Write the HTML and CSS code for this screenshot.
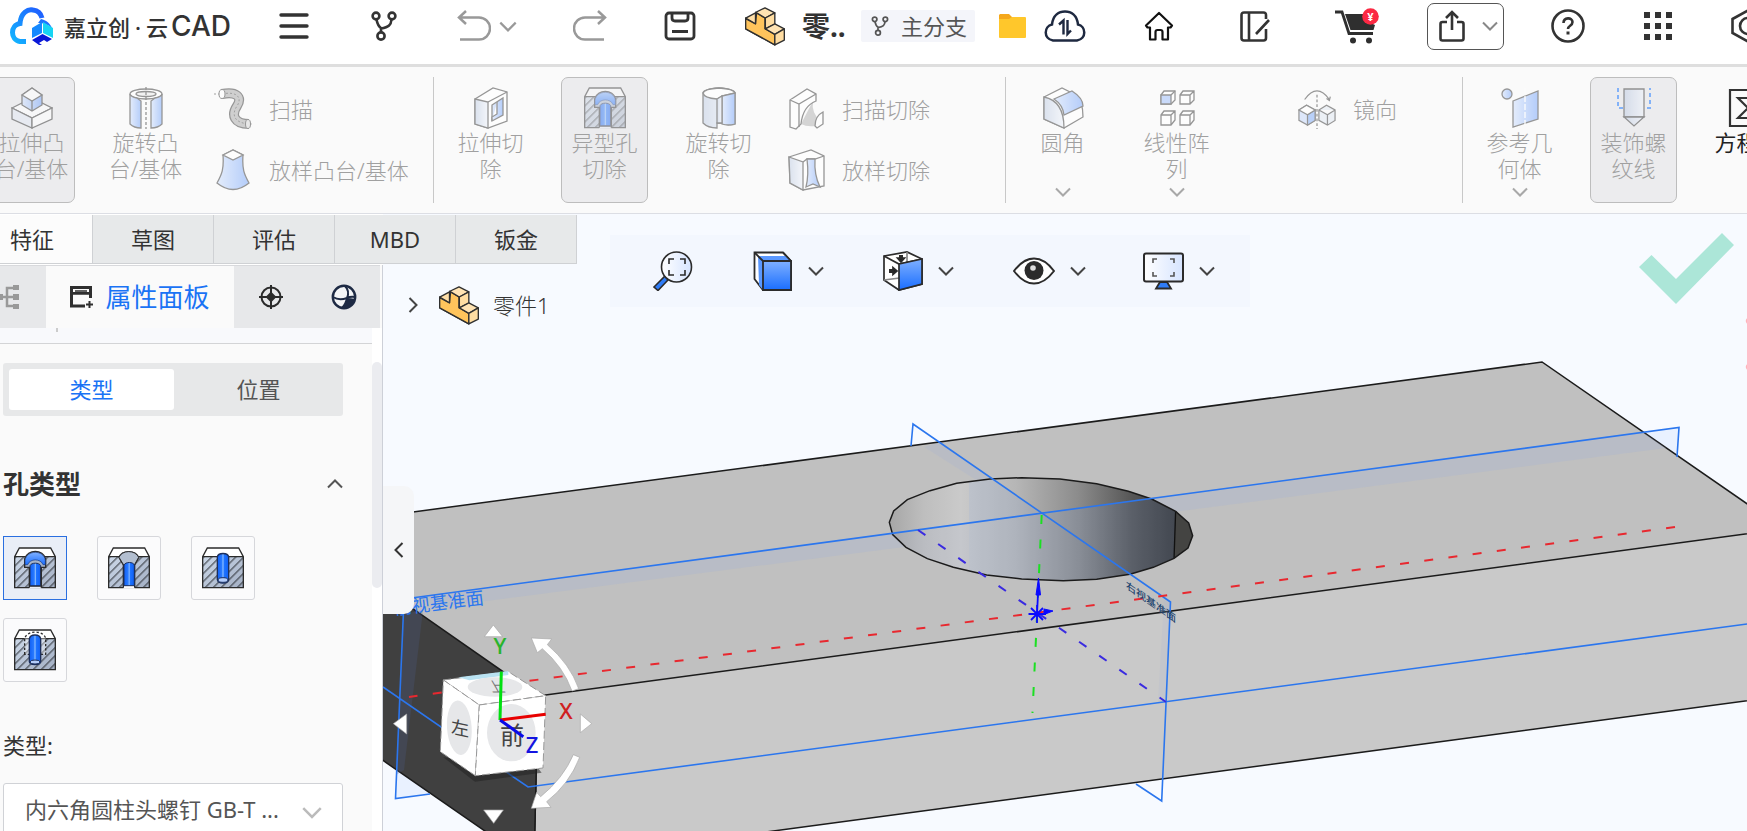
FILE: index.html
```html
<!DOCTYPE html>
<html lang="zh-CN">
<head>
<meta charset="utf-8">
<meta name="viewport" content="width=device-width, initial-scale=1">
<title>嘉立创·云CAD</title>
<link rel="stylesheet" href="styles.css">
</head>
<body>
<svg class="defs" width="0" height="0" aria-hidden="true">
  <defs>
    <linearGradient id="gBlue" x1="0" y1="0" x2="0" y2="1"><stop offset="0" stop-color="#7fb0ff"/><stop offset="1" stop-color="#1a6eff"/></linearGradient>
    <linearGradient id="gPale" x1="0" y1="0" x2="1" y2="0"><stop offset="0" stop-color="#d6e4fd"/><stop offset="1" stop-color="#86affa"/></linearGradient>
    <linearGradient id="gMist" x1="0" y1="0" x2="1" y2="0"><stop offset="0" stop-color="#c6d2e6"/><stop offset="1" stop-color="#f0f4fb"/></linearGradient>
    <linearGradient id="gGlass" x1="0" y1="0" x2="1" y2="0"><stop offset="0" stop-color="#fff"/><stop offset="1" stop-color="#d6e4ff"/></linearGradient>
    <linearGradient id="gSteel" x1="0" y1="0" x2="1" y2="1"><stop offset="0" stop-color="#ccd8e8"/><stop offset="1" stop-color="#a3afc4"/></linearGradient>
    <linearGradient id="gStem" x1="0" y1="0" x2="1" y2="0"><stop offset="0" stop-color="#0f5ff5"/><stop offset=".4" stop-color="#2a7bff"/><stop offset=".5" stop-color="#8fc0ff"/><stop offset=".6" stop-color="#1f74ff"/><stop offset="1" stop-color="#0f5ff5"/></linearGradient>
    <linearGradient id="gCloud" x1="1" y1="0" x2="0" y2="1"><stop offset="0" stop-color="#1f5cff"/><stop offset="1" stop-color="#12b5ff"/></linearGradient>
    <pattern id="hatch" width="17" height="17" patternUnits="userSpaceOnUse" patternTransform="rotate(45)"><path d="M8 0V17" stroke="#2b2f36" stroke-width="3"/></pattern>
    <symbol id="chev" viewBox="0 0 16 10"><path d="M1 1.5 8 8.5 15 1.5" fill="none" stroke="currentColor" stroke-width="2"/></symbol>
    <symbol id="branch" viewBox="0 0 26 30"><g fill="none" stroke="currentColor" stroke-width="2.6"><circle cx="5" cy="5" r="3.4"/><circle cx="21" cy="5" r="3.4"/><circle cx="10" cy="25" r="3.6"/><path d="M5.500 8.500c1 5 2 7 4.500 8.500V21M20.500 8.500C20 14 18 16 10 17.500"/></g></symbol>
    <symbol id="part" viewBox="0 0 118 114"><g stroke="#2f2f2f" stroke-width="4" stroke-linejoin="round"><path d="M2 32 32 48V15L60 60 88 78V111L2 64Z" fill="#ffc45c"/><path d="M34 17 59 32V63L88 80V111L2 64V34L31 49Z" fill="#ffc45c"/><path d="M2 32 31 17V49Z" fill="#ffdfa8"/><path d="M32 15 59 2 88 17 60 32Z" fill="#ffe3b3"/><path d="M60 32 88 17V50L60 64Z" fill="#ffdda2"/><path d="M60 64 88 49 116 64 88 80Z" fill="#ffe3b3"/><path d="M88 80 116 64V97L88 111Z" fill="#ffdda2"/></g></symbol>
    <symbol id="block" viewBox="0 0 126 126"><path d="M16 3H110L124 29H2Z" fill="#fff"/><path d="M2 29H124V122H2Z" fill="url(#gSteel)"/><path d="M2 29H124V122H2Z" fill="url(#hatch)"/><path d="M16 3H110L124 29V122H2V29ZM2 29H124" fill="none" stroke="#2b2b2b" stroke-width="4"/></symbol>
    <symbol id="hole-bore" viewBox="0 0 126 126"><use href="#block"/><path d="M45 58H82V125H45Z" fill="#e9eef7"/><path d="M32 61V36C40 6 88 6 95 36V61H80V117H48V61Z" fill="#a5b3c9" stroke="#2b2b2b" stroke-width="4"/><path d="M33 40C38 8 90 8 94 40V53H87C80 34 48 34 41 53H33Z" fill="url(#gBlue)" stroke="#1c3a78" stroke-width="2"/><path d="M48 56C52 46 76 46 80 56V116H48Z" fill="url(#gStem)" stroke="#1c2f5c" stroke-width="3"/><path d="M46 61V122M82 61V122" stroke="#2b2b2b" stroke-width="4"/></symbol>
    <symbol id="hole-sink" viewBox="0 0 126 126"><use href="#block"/><path d="M46 54H80V125H46Z" fill="#fbfbfc"/><path d="M33 31C42 8 82 8 92 31L80 54V122M33 31 46 54V122" fill="none" stroke="#2b2b2b" stroke-width="4"/><path d="M33 31C42 8 82 8 92 31L79 54H47Z" fill="#b3bfd0" stroke="#2b2b2b" stroke-width="3"/><path d="M48 54C52 44 76 44 79 54V116H48Z" fill="url(#gStem)" stroke="#1c2f5c" stroke-width="3"/></symbol>
    <symbol id="hole-plain" viewBox="0 0 126 126"><use href="#block"/><path d="M46 30C48 16 78 16 80 30V98C78 112 48 112 46 98Z" fill="url(#gStem)" stroke="#1c2f5c" stroke-width="4"/><ellipse cx="63" cy="99" rx="15" ry="7" fill="#b4cdfa" stroke="#1c2f5c" stroke-width="3"/></symbol>
    <symbol id="hole-tap" viewBox="0 0 126 126"><use href="#block"/><path d="M32 76V28C40 3 88 3 95 28V76Z" fill="#fff" fill-opacity=".35" stroke="#2b2b2b" stroke-width="4" stroke-dasharray="7 6"/><path d="M46 30C48 14 78 14 80 30V98C78 110 48 110 46 98Z" fill="url(#gStem)" stroke="#1c2f5c" stroke-width="4"/><ellipse cx="63" cy="99" rx="15" ry="6" fill="#b4cdfa" stroke="#1c2f5c" stroke-width="3"/></symbol>
  </defs>
</svg>

<div class="app">
  <header class="topbar">
    <a class="brand" href="#" aria-label="嘉立创·云CAD">
      <svg width="44" height="38" viewBox="0 0 44 38"><path d="M16 34.500H10C0 33 0 18 10 16.500C11 5 18 2 23 3C28 3.500 31 7 32 11" fill="none" stroke="url(#gCloud)" stroke-width="5"/><path d="M31 12c5 1 9 4 11 9-5-4-9-5-14-5Z" fill="#1f74ff"/><path d="M22 21 32 15V26L22 31Z" fill="#1689ff"/><path d="M33 15 43 21V31L33 26Z" fill="#17d4f4"/><path d="M22 33 32.500 27 42 32 37 35 34 33 29 36 32 38H29Z" fill="#0a18d8"/></svg>
      <span class="brand-text">嘉立创<span class="dot">·</span>云<span class="cad">CAD</span></span>
    </a>
    <nav class="tools" aria-label="主工具">
      <button class="tb" aria-label="菜单"><svg width="30" height="28" viewBox="0 0 30 28"><path d="M2 3H28M2 14H28M2 25H28" stroke="currentColor" stroke-width="3.400" stroke-linecap="round"/></svg></button>
      <button class="tb" aria-label="分支"><svg width="26" height="30"><use href="#branch"/></svg></button>
      <button class="tb tb-wide dim" aria-label="撤销"><svg width="34" height="32" viewBox="0 0 34 32" fill="none" stroke="currentColor" stroke-width="2.500"><path d="M9 1 2 7.500 9 14M2 7.500H22a11 11 0 0 1 0 22H3"/></svg><svg width="18" height="11"><use href="#chev"/></svg></button>
      <button class="tb dim" aria-label="重做"><svg width="34" height="32" viewBox="0 0 34 32" fill="none" stroke="currentColor" stroke-width="2.500"><path d="M25 1 32 7.500 25 14M32 7.500H12a11 11 0 0 0 0 22H31"/></svg></button>
      <button class="tb" aria-label="保存"><svg width="32" height="30" viewBox="0 0 32 30" fill="none" stroke="currentColor" stroke-width="2.800"><rect x="2" y="2" width="28" height="26" rx="3"/><path d="M8 2V7Q8 10 11 10H21Q24 10 24 7V2M8 20.500H24"/></svg></button>
    </nav>
    <div class="doc">
      <svg width="40" height="39"><use href="#part"/></svg>
      <strong class="doc-name">零..</strong>
      <button class="chip"><svg width="18" height="20"><use href="#branch"/></svg>主分支</button>
      <svg class="folder" width="27" height="24" viewBox="0 0 27 24"><path d="M1 0H10L13 3H26V8H0V1Z" fill="#f5a81c"/><path d="M0 5H10L13 3H26Q27 3 27 4V23Q27 24 26 24H1Q0 24 0 23Z" fill="#ffc72b"/></svg>
      <svg width="42" height="32" viewBox="0 0 42 32" fill="none" stroke="#1e2940" stroke-width="2.500"><path d="M9 30.500C-1 29 0 16 8 14.500 9 5 15 1.500 21 1.500S33 5 34 14.500C42 16 43 29 33 30.500Z"/><path d="M15 14.500 19.500 10.500V24.500M23.500 10V24L27 20.500" stroke-width="2.400"/></svg>
    </div>
    <nav class="links" aria-label="快捷入口">
      <button class="tb" aria-label="主页"><svg width="30" height="30" viewBox="0 0 30 30" fill="none" stroke="#111" stroke-width="2.200" stroke-linejoin="round"><path d="M15 2 28 14.500 26.500 16.500H24V28.500H18.500V21Q18.500 19 16.500 19H13.500Q11.500 19 11.500 21V28.500H6V16.500H3.500L2 14.500Z"/></svg></button>
      <button class="tb tb-mid" aria-label="编辑"><svg width="30" height="31" viewBox="0 0 30 31" fill="none" stroke="currentColor" stroke-width="2.600"><path d="M26 8V4Q26 1.500 23.500 1.500H4Q1.500 1.500 1.500 4V27Q1.500 29.500 4 29.500H23.500Q26 29.500 26 27V18M9 1.500V29.500M16 23 29 9"/></svg></button>
      <button class="tb tb-mid" aria-label="购物车"><svg width="44" height="36" viewBox="0 0 44 36"><path d="M0 4H7L14 25.500H38" fill="none" stroke="#2f2f2f" stroke-width="2.800"/><path d="M10 6H29Q31 14 40 17L38.500 22H15.500Z" fill="#2f2f2f"/><circle cx="18" cy="32.500" r="3" fill="#2f2f2f"/><circle cx="34" cy="32.500" r="3" fill="#2f2f2f"/><circle cx="35.500" cy="8.500" r="8.300" fill="#fb2943"/><text x="35.500" y="13" class="yen">¥</text></svg></button>
      <button class="share" aria-label="分享"><svg width="26" height="32" viewBox="0 0 26 32" fill="none" stroke="currentColor" stroke-width="2.600"><path d="M8 12H3.500Q1.500 12 1.500 14V28.500Q1.500 30.500 3.500 30.500H22.500Q24.500 30.500 24.500 28.500V14Q24.500 12 22.500 12H18M13 20V2M7 8 13 2 19 8"/></svg><svg class="muted" width="16" height="10"><use href="#chev"/></svg></button>
      <button class="tb" aria-label="帮助"><svg width="34" height="34" viewBox="0 0 34 34" fill="none" stroke="currentColor" stroke-width="2.600"><circle cx="17" cy="17" r="15.500"/><path d="M12.500 14c0-6 9-6 9-1 0 4-4.500 3.500-4.500 7"/><path d="M17 22.500V25.500" stroke-width="3"/></svg></button>
      <button class="tb" aria-label="应用"><svg width="30" height="28" viewBox="0 0 30 28" fill="currentColor"><path d="M1 0h6v6H1zM12 0h6v6h-6zM23 0h6v6h-6zM1 11h6v6H1zM12 11h6v6h-6zM23 11h6v6h-6zM1 22h6v6H1zM12 22h6v6h-6zM23 22h6v6h-6z"/></svg></button>
      <button class="tb" aria-label="设置"><svg width="34" height="34" viewBox="0 0 34 34" fill="none" stroke="currentColor" stroke-width="2.600"><path d="M1.500 10 17 1.500 32.500 10V24L17 32.500 1.500 24Z"/><circle cx="17" cy="17" r="8"/></svg></button>
    </nav>
  </header>

  <div class="ribbon">
    <div class="group g1">
      <button class="big on"><svg viewBox="0 0 42 42"><g fill="#fff" stroke="#555" stroke-width="1.300"><path d="M1 21 21 11 41 21 21 31Z"/><path d="M1 21 21 31V41L1 32Z" fill="#e4eaf3"/><path d="M21 31 41 21V32L21 41Z"/><path d="M11 8 21 1 31 8V18L21 24 11 18Z" fill="url(#gPale)"/><path d="M11 8 21 1 31 8 21 14Z"/><path d="M21 14V24"/></g></svg><span>拉伸凸台/基体</span></button>
      <button class="big"><svg viewBox="0 0 42 42"><g fill="url(#gPale)" stroke="#555" stroke-width="1.300"><ellipse cx="21" cy="7" rx="16" ry="5" fill="#fff"/><ellipse cx="21" cy="7" rx="10" ry="2.500" fill="#eee"/><path d="M5 7V37Q9 41 16 41V14L12 11Q6 10 5 7Z"/><path d="M37 7V37Q33 41 26 41V14L30 11Q36 10 37 7Z"/><path d="M21 0V42" stroke-dasharray="3 2"/></g></svg><span>旋转凸台/基体</span></button>
      <div class="col">
        <button class="row"><svg viewBox="0 0 38 42"><path d="M8 6C22 3 29 9 23 18S20 36 35 36" fill="none" stroke="#555" stroke-width="10"/><path d="M8 6C22 3 29 9 23 18S20 36 35 36" fill="none" stroke="#b4b4b4" stroke-width="7.500"/><path d="M0 6H8C22 3 29 9 23 18S20 36 38 36" fill="none" stroke="#666" stroke-dasharray="2 2"/><ellipse cx="8" cy="6" rx="3" ry="4.500" fill="#fff" stroke="#555"/><ellipse cx="34" cy="36" rx="2.500" ry="4.500" fill="#ddd" stroke="#555"/></svg>扫描</button>
        <button class="row"><svg viewBox="0 0 38 42"><g fill="url(#gPale)" stroke="#555" stroke-width="1.300"><path d="M9 6 19 1 29 6C28 20 30 25 35 34Q19 47 3 34C8 25 10 20 9 6Z"/><path d="M9 6 19 1 29 6 19 11Z" fill="#fff"/></g></svg>放样凸台/基体</button>
      </div>
    </div>
    <div class="group g2">
      <button class="big"><svg viewBox="0 0 42 42"><g fill="#fff" stroke="#555" stroke-width="1.300"><path d="M5 12 23 1 37 5V34L18 41 5 37Z"/><path d="M5 12 18 15V41L5 37Z" fill="url(#gMist)"/><path d="M18 15 37 5"/><path d="M22 18 33 11V28L22 34Z" fill="url(#gPale)"/><path d="M22 34V30L27 27V15"/></g></svg><span>拉伸切除</span></button>
      <button class="big on"><svg class="faded" viewBox="0 0 126 126"><use href="#hole-bore"/></svg><span>异型孔切除</span></button>
      <button class="big"><svg viewBox="0 0 42 42"><g fill="url(#gMist)" stroke="#555" stroke-width="1.300"><path d="M5 6V36Q10 41 19 41V36H22Q33 39 37 37V6Q36 2 21 1 6 2 5 6Z"/><path d="M5 6Q6 2 21 1 36 2 37 6L24 9 19 12Q6 11 5 6Z" fill="#fff"/><path d="M24 9 37 6V37Q30 39 24 37Z" fill="url(#gPale)"/><path d="M19 12V36H24V9Z"/></g></svg><span>旋转切除</span></button>
      <div class="col">
        <button class="row"><svg viewBox="0 0 38 42"><g fill="#fff" stroke="#555" stroke-width="1.300"><path d="M26 13Q24 25 34 34L28 38Q20 39 14 36Z" fill="#bbb" stroke="none"/><path d="M3 12 20 1 29 6V13Q16 18 14 36L9 41 3 39Z"/><path d="M3 12 12 16 29 6M12 16V39"/><path d="M28 38Q28 28 36 24V36L30 40Z"/></g></svg>扫描切除</button>
        <button class="row"><svg viewBox="0 0 38 42"><g fill="#fff" stroke="#555" stroke-width="1.300"><path d="M2 8 24 1 37 7V37L16 41 3 34Z"/><path d="M2 8 16 13V41L3 34Z" fill="url(#gMist)"/><path d="M16 13 20 10H28L37 7"/><path d="M20 10H28Q27 26 33 38L26 35 19 38Q22 26 20 10Z" fill="url(#gPale)"/></g></svg>放样切除</button>
      </div>
    </div>
    <div class="group g3">
      <button class="big"><svg viewBox="0 0 42 42"><g fill="#fff" stroke="#555" stroke-width="1.300"><path d="M2 10 20 1 34 8Q41 14 41 30L22 41 2 32Z"/><path d="M2 10Q22 14 22 41L2 32Z" fill="url(#gMist)"/><path d="M12 12 30 4Q41 11 41 19L22 28Q21 18 12 12Z" fill="url(#gPale)"/></g></svg><span>圆角</span><svg class="more"><use href="#chev"/></svg></button>
      <button class="big"><svg viewBox="0 0 42 42"><g fill="#fff" stroke="#555" stroke-width="1.300"><path d="M5 8 8 4H19V13L15 17H5Z"/><path d="M5 8H15V17H5Z" fill="#a9c6fb"/><path d="M15 8 19 4"/><path d="M24 8 27 4H38V13L34 17H24ZM24 8H34V17M34 8 38 4M5 28 8 24H19V33L15 38H5ZM5 28H15V38M15 28 19 24M24 28 27 24H38V33L34 38H24ZM24 28H34V38M34 28 38 24"/></g></svg><span>线性阵列</span><svg class="more"><use href="#chev"/></svg></button>
      <div class="col col-mirror">
        <button class="row"><svg viewBox="0 0 40 42"><g fill="#fff" stroke="#555" stroke-width="1.300"><path d="M7 11Q20-7 33 11M30 10 33 12 34 8" fill="none"/><path d="M20 6V42" stroke-dasharray="3 2"/><path d="M1 22 9 17 18 22V33L10 38 1 33Z" fill="#cbdcfb"/><path d="M10 27 18 22V33L10 38Z" fill="#8fb5f8"/><path d="M1 22 9 17 18 22 10 27Z"/><path d="M22 22 30 17 39 22V33L31 38 22 33ZM22 22 31 27 39 22M31 27V38" fill="#e4eaf3"/></g></svg>镜向</button>
      </div>
    </div>
    <div class="group g4">
      <button class="big"><svg viewBox="0 0 42 42"><g fill="url(#gPale)" stroke="#555" stroke-width="1.300"><circle cx="8" cy="7" r="5"/><path d="M14 14 39 4V32L14 40Z"/><path d="M26 1V40" stroke="#fff" stroke-dasharray="6 2"/></g></svg><span>参考几何体</span><svg class="more"><use href="#chev"/></svg></button>
      <button class="big on"><svg viewBox="0 0 42 42"><g fill="url(#gMist)" stroke="#555" stroke-width="1.300"><path d="M5 1V21H37V1" fill="none" stroke="#3f8cff" stroke-width="2" stroke-dasharray="4 3"/><path d="M11 2H31V30H11Z"/><path d="M11 30H31L21 39Z"/></g></svg><span>装饰螺纹线</span></button>
      <button class="big ready"><svg viewBox="0 0 42 42" fill="none" stroke="#333" stroke-width="2.200"><path d="M3 3H39V39H3Z"/><path d="M30 15V11H11L21 21 11 31H30V27"/></svg><span>方程式</span></button>
    </div>
  </div>

  <main class="workspace">
    <nav class="tabs" aria-label="功能页">
      <a class="active" href="#">特征</a><a href="#">草图</a><a href="#">评估</a><a href="#">MBD</a><a href="#">钣金</a>
    </nav>

    <aside class="panel">
      <div class="panel-tabs">
        <button class="pt pt-tree" aria-label="特征树"><svg width="28" height="24" viewBox="0 0 28 24"><path d="M0 12H24M24 3H14V21H24" fill="none" stroke="#999" stroke-width="2.500"/><path d="M3 9h7v6H3zM20 0h6v5h-6zM20 9h6v6h-6zM20 19h6v5h-6z" fill="#999"/></svg></button>
        <button class="pt pt-props"><svg width="24" height="22" viewBox="0 0 24 22"><path d="M15 20H1.500V1.500H20.500V12" fill="none" stroke="#2f2f2f" stroke-width="3"/><path d="M5 5H17M1 8H21" stroke="#2f2f2f" stroke-width="1.500"/><path d="M0 0H21V3H0ZM3 6H19V8H3Z" fill="#2f2f2f"/><path d="M19.500 15V22M16 18.500H23" stroke="#2f2f2f" stroke-width="2"/></svg>属性面板</button>
        <button class="pt pt-icon" aria-label="定位"><svg width="24" height="24" viewBox="0 0 24 24" fill="none" stroke="#2b2b2b" stroke-width="2"><circle cx="12" cy="12" r="9.500"/><path d="M12 0V24M0 12H24"/><path d="M12 8 16 12 12 16 8 12Z" fill="#2b2b2b"/></svg></button>
        <button class="pt pt-icon" aria-label="外观"><svg width="26" height="26" viewBox="0 0 26 26"><circle cx="13" cy="13" r="11.200" fill="#f4f5f7"/><path d="M16 14Q20 14 24 15 21 24 12 24 15 20 16 14Z" fill="#1e2a44"/><path d="M2 13Q8 17 16 14 20 12 24 13M14 2Q19 7 16 14 15 20 11 24" fill="none" stroke="#1e2a44" stroke-width="2"/><circle cx="13" cy="13" r="11.200" fill="none" stroke="#1e2a44" stroke-width="2.400"/></svg></button>
      </div>
      <div class="panel-scroll">
        <div class="panel-body">
          <div class="rule"></div>
          <div class="segment" role="tablist"><button class="seg on" role="tab">类型</button><button class="seg" role="tab">位置</button></div>
          <h2 class="section">孔类型<svg width="16" height="10"><use href="#chev"/></svg></h2>
          <div class="holes">
            <button class="hole on" aria-label="柱形沉头孔"><svg width="42" height="42"><use href="#hole-bore"/></svg></button>
            <button class="hole" aria-label="锥形沉头孔"><svg width="42" height="42"><use href="#hole-sink"/></svg></button>
            <button class="hole" aria-label="孔"><svg width="42" height="42"><use href="#hole-plain"/></svg></button>
            <button class="hole" aria-label="直螺纹孔"><svg width="42" height="42"><use href="#hole-tap"/></svg></button>
          </div>
          <label class="field-label" for="std">类型:</label>
          <div class="select"><select id="std"><option>内六角圆柱头螺钉 GB-T ...</option></select><svg width="20" height="13"><use href="#chev"/></svg></div>
        </div>
        <div class="scrollbar"><span></span></div>
      </div>
    </aside>

    <section class="viewer" aria-label="模型视图">
      <svg class="scene" viewBox="383 214 1364 617" preserveAspectRatio="xMinYMin slice">
        <defs>
          <linearGradient id="bore" x1="0" x2="1" y1="0" y2="0"><stop offset="0" stop-color="#a4a4a4"/><stop offset=".12" stop-color="#bebebe"/><stop offset=".24" stop-color="#cacaca"/><stop offset=".42" stop-color="#b6b6b6"/><stop offset=".62" stop-color="#8c8c8c"/><stop offset=".8" stop-color="#555"/><stop offset=".94" stop-color="#3a3a3a"/></linearGradient>
          <clipPath id="rim"><path d="M118 217 131 183 172 149 240 122 320 100 420 87 515 83 630 87 740 101 835 124 905 147 977 184 1016 219 1028 257 1014 294 972 325 910 352 840 373 740 388 640 392 515 387 410 375 310 352 232 326 168 292 128 254Z"/></clipPath>
        </defs>
        <path d="M383 652 403 614 395 798 436 793 383 757Z" fill="#e9f1ff"/>
        <path d="M1643 432 1679 427 1677 456Z" fill="#e9f1ff"/>
        <g stroke="#1b1b1b" stroke-width="1.500">
          <path d="M300 527 1542 362 1850 575 1850 520 538 696 300 530Z" fill="#c0c0c0" stroke="none"/>
          <path d="M538 696 1850 520V687L534 863Z" fill="#c9c9c9"/>
          <path d="M300 530 538 696 534 865 300 703Z" fill="#404040"/>
          <path d="M300 527 1542 362 1850 575" fill="none"/>
        </g>
        <path d="M415 597 1643 432 1666 448 850 554 440 607Z" fill="#9fb0d8" fill-opacity=".24"/>
        <path d="M924 447 941 442 992 478 976 480Z" fill="#9fb0d8" fill-opacity=".2"/>
        <path d="M403 614 423 610 404 770 396 775Z" fill="#4a5a8a" fill-opacity=".25"/>
        <path d="M1164 600 1170 602 1166 702 1158 702Z" fill="#9fb0d8" fill-opacity=".15"/>
        <g transform="translate(850 450) scale(.33333)">
          <g clip-path="url(#rim)">
            <path d="M110 70H1035V400H110Z" fill="url(#bore)"/>
            <path d="M357 217 357 87 430 87 573 188 905 144 975 180V400H357Z" fill="#7aa0e8" fill-opacity=".13"/>
            <path d="M110 250 357 217V400H110Z" fill="#9db4e0" fill-opacity=".1"/>
            <path d="M977 180H1040V330H972Z" fill="#444442" stroke="#111" stroke-width="4"/>
          </g>
          <path d="M118 217 131 183 172 149 240 122 320 100 420 87 515 83 630 87 740 101 835 124 905 147 977 184 1016 219 1028 257 1014 294 972 325 910 352 840 373 740 388 640 392 515 387 410 375 310 352 232 326 168 292 128 254Z" fill="none" stroke="#1b1b1b" stroke-width="4.500"/>
        </g>
        <g fill="none" stroke="#2b76ee" stroke-width="1.600">
          <path d="M404 599 1679 427.500 1677 457M404 599 395.500 798.500 430 794M383 687 528 787 1747 624"/>
          <path d="M911 446 913 424 1170.500 602 1161.700 801 1136 784"/>
        </g>
        <path d="M1675 527 409 697" stroke="#e8282f" stroke-width="2" stroke-dasharray="9 15.400"/>
        <path d="M918 530 1166 702" stroke="#3a2be0" stroke-width="2" stroke-dasharray="9 15.500"/>
        <path d="M1041.700 515 1032.500 713" stroke="#1be022" stroke-width="2" stroke-dasharray="9 15.600"/>
        <g stroke="#0a0aff" stroke-width="1.800" fill="#0a0aff"><path d="M1037 605V623M1028.500 614H1046M1031 608 1043 620M1043 608 1031 620M1037 614 1038 594"/><path d="M1038.500 578 1036 595H1040.500ZM1053 611 1044 609V614.500Z" stroke-width="1"/></g>
        <text class="plane" transform="translate(395 615) rotate(-7)">前视基准面</text>
        <text class="plane-side" transform="translate(1126 588) skewY(35)">右视基准面</text>

        <g transform="translate(380 560) scale(.33333)">
          <path d="M190 592 285 665 485 638 472 622Z" fill="#222" fill-opacity=".55"/>
          <g stroke="#999" stroke-width="3" stroke-dasharray="24 10" fill="#fff">
            <path d="M190 360 385 335 497 407 298 435Z"/><path d="M190 360 298 435 286 647 181 575Z"/><path d="M298 435 497 407 489 624 286 647Z"/>
          </g>
          <path d="M235 352 385 333 385 345 268 361Z" fill="#b9e2f2"/>
          <g fill="#e6e7e9"><ellipse cx="345" cy="381" rx="82" ry="29"/><ellipse cx="238" cy="503" rx="37" ry="82" transform="rotate(-4 238 503)"/><ellipse cx="394" cy="518" rx="73" ry="86"/></g>
        </g>
        <text class="cube-text" transform="translate(460 735) skewY(12)" text-anchor="middle">左</text>
        <text class="cube-text big-face" x="512" y="744" text-anchor="middle">前</text>
        <text class="cube-text top-face" transform="translate(499 692) skewX(30)" text-anchor="middle">上</text>
        <g transform="translate(380 560) scale(.33333)">
          <g stroke-width="9" fill="none"><path d="M360 480 364 335" stroke="#00e010"/><path d="M360 480 497 463" stroke="#e80000"/><path d="M360 480 430 530" stroke="#0a0ae8"/></g>
          <g fill="#fff" stroke="#a8a8a8" stroke-width="2">
            <path d="M340 195 313 230H368ZM40 491 80 462V522ZM635 491 601 462V518ZM341 790 311 750H370Z"/>
            <path d="M454 234 515 237 502 254Q570 312 596 386L576 393Q550 320 487 266L472 278Z"/>
            <path d="M454 745 470 697 482 710Q550 655 580 584L599 592Q568 672 500 725L513 742Z"/>
          </g>
        </g>
        <text class="axis" x="500" y="654" fill="#28b42c">Y</text>
        <text class="axis" x="566" y="719" fill="#d02020">X</text>
        <text class="axis" x="532" y="753" fill="#1414e0">Z</text>
      </svg>

      <div class="tree"><svg class="twist" width="16" height="10"><use href="#chev"/></svg><svg width="40" height="39"><use href="#part"/></svg>零件1</div>

      <div class="viewbar" role="toolbar">
        <button class="vb" aria-label="整屏显示"><svg width="40" height="40" viewBox="0 0 40 40" stroke="#2b2b2b" stroke-width="1.600"><path d="M1 36 12 25 15 29 5 39.500Z" fill="#2f7cf6"/><circle cx="23.500" cy="16" r="15" fill="url(#gGlass)"/><path d="M16 13V8H21M27 8H32V13M32 19V24H27M21 24H16V19" fill="none"/></svg></button>
        <button class="vb" aria-label="显示样式"><svg width="40" height="40" viewBox="0 0 40 40" stroke="#2b2b2b" stroke-width="1.800"><path d="M1.500 1.500H30L38 10V39H10L1.500 28Z" fill="#fff"/><path d="M5 5H33L38 10H10ZM5 5 10 10V39L6 34Z" fill="#5a98ff" stroke="none"/><path d="M10 10H38V39H10Z" fill="url(#gBlue)"/><path d="M1.500 1.500 10 10M30 1.500 38 10" fill="none"/></svg><svg width="16" height="10"><use href="#chev"/></svg></button>
        <button class="vb" aria-label="视图方向"><svg width="40" height="40" viewBox="0 0 40 40" stroke="#2b2b2b" stroke-width="1.700"><path d="M1 5 24 1 39 8V33L16 39 1 29Z" fill="#fff"/><path d="M24 1V26L1 29" fill="none" stroke="#888"/><path d="M1 5 16 13 39 8" fill="none"/><path d="M16 13 39 8V33L16 39Z" fill="url(#gBlue)"/><path d="M18 4V8M6 20H11" stroke-width="4"/><path d="M14.500 7H21.500L18 11ZM10 16.500V23.500L14 20Z" fill="#222"/></svg><svg width="16" height="10"><use href="#chev"/></svg></button>
        <button class="vb" aria-label="显示隐藏"><svg width="42" height="28" viewBox="0 0 42 28"><path d="M1 14C7 6 14 1.500 21 1.500S35 6 41 14C35 22 28 26.500 21 26.500S7 22 1 14Z" fill="#fff" stroke="#2b2b2b" stroke-width="2"/><circle cx="21" cy="13.500" r="9.500" fill="#2b2b2b"/><circle cx="20" cy="11" r="2.800" fill="#ddd"/></svg><svg width="16" height="10"><use href="#chev"/></svg></button>
        <button class="vb" aria-label="场景"><svg width="41" height="38" viewBox="0 0 41 38"><rect x="1" y="1.500" width="39" height="28" rx="2" fill="url(#gGlass)" stroke="#2b2b2b" stroke-width="2"/><path d="M10 11V7H14M27 7H31V11M31 20V24H27M14 24H10V20" fill="none" stroke="#555" stroke-width="1.600"/><path d="M17 30H24L28 36.500H13Z" fill="#2f7cf6" stroke="#2b2b2b" stroke-width="1.800"/></svg><svg width="16" height="10"><use href="#chev"/></svg></button>
      </div>

      <div class="confirm">
        <button aria-label="确定"><svg width="96" height="71" viewBox="0 0 96 71"><path d="M0 34 12.500 22 37 46 83 0 95 12 37 71Z" fill="#ace6d8"/></svg></button>
        <button class="cancel" aria-label="取消"><svg width="60" height="60" viewBox="0 0 60 60"><path d="M9 7 55 53M55 7 9 53" stroke="#ffb3ba" stroke-width="8" stroke-linecap="round"/></svg></button>
      </div>
      <button class="collapse" aria-label="收起面板"><svg width="16" height="10"><use href="#chev"/></svg></button>
    </section>
  </main>
</div>
</body>
</html>
```
FILE: styles.css
```css
* { box-sizing: border-box; }

body {
  margin: 0;
  overflow: hidden;
  font: 22px/26px "Noto Sans", "Noto Sans CJK SC", sans-serif;
  color: #333;
}

button {
  padding: 0;
  border: 0;
  background: none;
  font: inherit;
  color: inherit;
  cursor: pointer;
}

a { color: inherit; text-decoration: none; }
svg { display: block; flex: none; }
.defs { position: absolute; }

.app {
  display: flex;
  flex-direction: column;
  height: 100vh;
  overflow: hidden;
}

/* Top bar */
.topbar {
  display: flex;
  flex: none;
  align-items: center;
  height: 67px;
  padding: 0 0 12px 10px;
  border-bottom: 3px solid #dedede;
  background: #fff;
  overflow: hidden;
}
.topbar > * { flex: none; }

.brand { display: flex; align-items: center; gap: 10px; width: 239px; }
.brand-text { font-weight: 500; white-space: nowrap; }
.dot { margin: 0 5px; }
.cad { margin-left: 3px; font: 500 28px/26px Inter, sans-serif; }

.tools, .links, .doc { display: flex; align-items: center; }
.tb {
  display: flex;
  flex: none;
  align-items: center;
  justify-content: center;
  width: 90px;
  height: 48px;
}
.tb-wide { width: 116px; gap: 8px; }
.tb-mid { width: 102px; }
.dim { color: #999; }

.doc { width: 389px; padding-left: 20px; }
.doc-name { width: 59px; margin-left: 17px; font-size: 28px; white-space: nowrap; }
.chip {
  display: flex;
  align-items: center;
  gap: 12px;
  height: 32px;
  padding: 0 8px 0 10px;
  border-radius: 2px;
  background: #f4f5fa;
  color: #555;
}
.folder { margin: 0 18px 0 24px; }

.yen { font: 700 11px "Noto Sans", sans-serif; fill: #fff; text-anchor: middle; }
.share {
  display: flex;
  flex: none;
  align-items: center;
  gap: 17px;
  width: 77px;
  height: 47px;
  margin: 0 19px;
  padding-left: 11px;
  border: 1px solid #555;
  border-radius: 7px;
}
.muted { color: #888; }

/* Ribbon */
.ribbon {
  display: flex;
  flex: none;
  height: 147px;
  margin-left: -12px;
  padding: 10px 0;
  border-bottom: 1px solid #dcdee4;
  background: #fafafa;
  overflow: hidden;
}
.group {
  display: flex;
  flex: none;
  gap: 27px;
  padding-left: 13px;
  border-right: 1px solid #c8c8c8;
}
.g1 { width: 446px; padding-left: 0; }
.g2 { width: 572px; }
.g3 { width: 457px; }
.g4 { border: 0; }

.big {
  display: flex;
  flex: none;
  flex-direction: column;
  align-items: center;
  width: 87px;
  height: 126px;
  padding: 9px 0 0;
  border: 1px solid transparent;
  border-radius: 7px;
  color: #a0a0a0;
}
.big svg { width: 42px; height: 42px; opacity: .6; }
.big .faded { opacity: .45; }
.big span { width: 78px; text-align: center; font-weight: 300; }
.big.on { border-color: #bdbdbd; background: #ececee; }
.big .more { width: 16px; height: 10px; margin-top: auto; margin-bottom: 5px; opacity: .9; }
.big.ready { color: #222; }
.big.ready svg { opacity: 1; }
.ready span { font-weight: 400; }

.col { display: flex; flex-direction: column; gap: 19px; margin-left: -2px; padding-top: 11px; }
.col-mirror { padding-left: 53px; }
.row {
  display: flex;
  align-items: center;
  gap: 17px;
  color: #a0a0a0;
  font-weight: 300;
  white-space: nowrap;
}
.row svg { width: 38px; height: 42px; opacity: .6; }

/* Workspace */
.workspace {
  display: grid;
  flex: 1;
  grid-template-columns: 383px 1fr;
  grid-template-rows: 51px 1fr;
  min-height: 0;
}

.tabs {
  z-index: 1;
  display: flex;
  grid-area: 1 / 1 / 2 / 3;
  justify-self: start;
  height: 50px;
  margin-left: -28px;
  padding-top: 1px;
}
.tabs a {
  width: 121px;
  padding-top: 11px;
  border-right: 1px solid #cfd1d4;
  border-bottom: 1px solid #cfd1d4;
  background: #e7e9ea;
  text-align: center;
}
.tabs .active { background: #fcfcfc; }

.panel {
  display: flex;
  flex-direction: column;
  grid-area: 2 / 1 / 3 / 2;
  min-height: 0;
  border-right: 1px solid #cdd0d8;
  background: #fafafa;
}
.panel-tabs {
  display: flex;
  flex: none;
  height: 63px;
  margin-right: 2px;
  border-top: 1px solid #d8d9dc;
  background: #e7e8ea;
}
.pt { display: flex; align-items: center; justify-content: center; }
.pt-tree { width: 46px; justify-content: flex-start; overflow: hidden; }
.pt-tree svg { margin-left: -7px; }
.pt-props { gap: 11px; width: 188px; background: #fafafa; color: #1a73f5; font-size: 26px; }
.pt-icon { width: 73px; }

.panel-scroll { display: flex; flex: 1; min-height: 0; overflow: hidden; }
.panel-body { flex: 1; }
.rule { height: 16px; border-bottom: 1px solid #d3d4d6; background: #f8f9fc; }
.rule::before {
  content: "";
  display: block;
  width: 2px;
  height: 4px;
  margin-left: 56px;
  background: #ccc;
}
.scrollbar { width: 10px; padding-top: 34px; background: #fff; }
.scrollbar span { display: block; height: 226px; border-radius: 5px; background: #ebecf0; }

.segment {
  display: flex;
  width: 340px;
  height: 53px;
  margin: 19px 0 0 3px;
  padding: 6px 0 6px 6px;
  border-radius: 3px;
  background: #e7e8e9;
}
.seg { flex: 1; padding-bottom: 2px; border-radius: 3px; color: #555; }
.seg.on { flex: 0 0 165px; background: #fff; color: #1a73f5; }

.section {
  display: flex;
  align-items: center;
  justify-content: space-between;
  width: 340px;
  margin: 54px 0 0 3px;
  font-size: 26px;
  line-height: 28px;
}
.section svg { transform: rotate(180deg); color: #555; }

.holes {
  display: grid;
  grid-template-columns: repeat(3, 64px);
  gap: 18px 30px;
  margin: 38px 0 0 3px;
}
.hole {
  display: flex;
  align-items: center;
  justify-content: center;
  height: 64px;
  border: 1px solid #d6d7db;
  border-radius: 3px;
  background: #fbfbfc;
}
.hole.on { border-color: #2a6fe0; border-radius: 0; background: #e9eef7; }

.field-label { display: block; margin: 50px 0 0 3px; }
.select { position: relative; width: 340px; margin: 25px 0 0 3px; }
.select select {
  width: 100%;
  height: 54px;
  padding: 0 50px 2px 21px;
  border: 1px solid #d0d2d6;
  border-radius: 3px;
  background: #fff;
  appearance: none;
  font: inherit;
  color: #555;
}
.select svg { position: absolute; right: 21px; top: 23px; color: #bbb; }

/* Viewer */
.viewer {
  position: relative;
  grid-area: 1 / 2 / 3 / 3;
  background: #f7faff;
  overflow: hidden;
}
.scene { width: 100%; height: 100%; }
.scene text { font-family: "Noto Sans", "Noto Sans CJK SC", sans-serif; }
.plane { font-size: 18px; fill: #2b76ee; }
.plane-side { font-size: 10px; font-weight: 500; fill: #24456f; }
.cube-text { font-size: 18px; fill: #444; }
.cube-text.big-face { font-size: 24px; }
.cube-text.top-face { font-size: 14px; fill: #777; }
.axis { font-size: 22px; font-weight: 500; text-anchor: middle; }

.tree {
  position: absolute;
  top: 71px;
  left: 22px;
  display: flex;
  align-items: center;
  height: 40px;
  font-weight: 300;
}
.tree svg + svg { margin: 0 14px 0 18px; }
.twist { transform: rotate(-90deg); color: #444; }

.viewbar {
  position: absolute;
  top: 21px;
  left: 227px;
  display: flex;
  width: 640px;
  height: 72px;
  padding-left: 43px;
  background: #f3f7fe;
}
.vb { display: flex; flex: none; align-items: center; gap: 15px; width: 130px; color: #444; }
.vb:first-child { width: 100px; }

.confirm { position: absolute; top: 19px; right: 12px; }
.cancel { position: absolute; left: 102px; top: 81px; }

.collapse {
  position: absolute;
  top: 272px;
  left: 0;
  display: grid;
  place-items: center;
  width: 31px;
  height: 128px;
  border-radius: 0 10px 10px 0;
  background: #f5f6f8;
}
.collapse svg { transform: rotate(90deg); }
```
